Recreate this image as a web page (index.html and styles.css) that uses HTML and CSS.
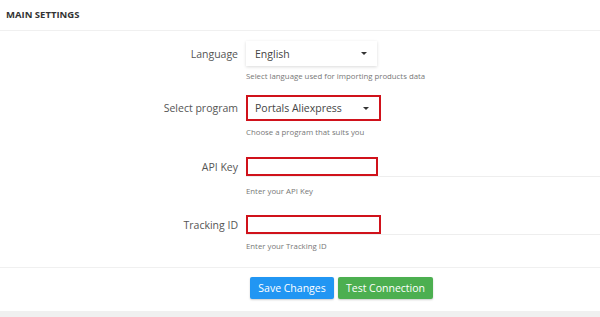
FILE: index.html
```html
<!DOCTYPE html>
<html lang="en">
<head>
  <meta charset="UTF-8" />
  <title>Main Settings</title>
  <link rel="stylesheet" href="styles.css">
</head>
<body>

  <div class="panel">
    <div class="panel-head">MAIN SETTINGS</div>

    <div class="panel-body">
      <div class="form-row row-lang">
        <label class="label">Language</label>
        <div class="select">
          <span>English</span>
          <span class="caret"></span>
        </div>
        <div class="help">Select language used for importing products data</div>
      </div>

      <div class="form-row row-program">
        <label class="label">Select program</label>
        <div class="select marked">
          <span>Portals Aliexpress</span>
          <span class="caret"></span>
        </div>
        <div class="help">Choose a program that suits you</div>
      </div>

      <div class="form-row row-api">
        <label class="label">API Key</label>
        <div class="line-input">
          <div class="mark short"></div>
        </div>
        <div class="help">Enter your API Key</div>
      </div>

      <div class="form-row row-track">
        <label class="label">Tracking ID</label>
        <div class="line-input">
          <div class="mark"></div>
        </div>
        <div class="help">Enter your Tracking ID</div>
      </div>
    </div>

    <div class="panel-foot">
      <button class="btn btn-blue">Save Changes</button>
      <button class="btn btn-green">Test Connection</button>
    </div>
  </div>

  <div class="page-bottom"></div>

</body>
</html>
```

FILE: styles.css
```css
body {
  margin: 0;
  font-family: "Open Sans", "Noto Sans", sans-serif;
  color: #555;
  background: #fff;
}
.panel {
  background: #fff;
}
.panel-head {
  height: 30px;
  line-height: 30px;
  padding-left: 6px;
  font-size: 9.5px;
  font-weight: bold;
  color: #333;
  border-bottom: 1px solid #f0f0f0;
}
.panel-body {
  padding-top: 10px;
}
.form-row {
  display: grid;
  grid-template-columns: 238px 1fr;
  grid-template-areas:
    "label control"
    ".     help";
  column-gap: 8px;
}
.label {
  grid-area: label;
  align-self: center;
  text-align: right;
  font-size: 10.5px;
  color: #555;
}
.select {
  grid-area: control;
  width: 131px;
  height: 25px;
  box-sizing: border-box;
  display: flex;
  align-items: center;
  justify-content: space-between;
  padding: 0 10px 0 9px;
  font-size: 10.5px;
  color: #444;
  box-shadow: 0 1px 3px rgba(0,0,0,0.15);
}
.select.marked {
  width: 135px;
  height: 26px;
  border: 2px solid #d0121b;
  box-shadow: none;
  padding-left: 7px;
}
.caret {
  width: 0;
  height: 0;
  border-left: 3px solid transparent;
  border-right: 3px solid transparent;
  border-top: 3px solid #333;
}
.line-input {
  grid-area: control;
  border-bottom: 1px solid #eee;
}
.mark {
  width: 135px;
  height: 19px;
  box-sizing: border-box;
  border: 2px solid #d0121b;
}
.mark.short {
  width: 132px;
  height: 19px;
}
.help {
  grid-area: help;
  font-size: 7.8px;
  line-height: 12px;
  color: #777;
}
.row-lang .help { margin-top: 4px; }
.row-program { margin-top: 13px; }
.row-program .help { margin-top: 5px; }
.row-api { margin-top: 19px; }
.row-api .help { margin-top: 8px; }
.row-track { margin-top: 18px; }
.row-track .help { margin-top: 5px; }
.panel-foot {
  margin-top: 15px;
  border-top: 1px solid #f0f0f0;
  padding: 9px 0 12px 250px;
  display: flex;
  gap: 4px;
}
.btn {
  border: none;
  height: 22px;
  padding: 0;
  white-space: nowrap;
  font-family: "Open Sans", "Noto Sans", sans-serif;
  font-size: 10.5px;
  color: #fff;
  border-radius: 2px;
  box-shadow: 0 1px 2px rgba(0,0,0,0.2);
}
.btn-blue {
  background-color: #2196f3;
  width: 84px;
}
.btn-green {
  background-color: #4caf50;
  width: 95px;
}
.page-bottom {
  height: 20px;
  background: #f0f0f0;
}
```
